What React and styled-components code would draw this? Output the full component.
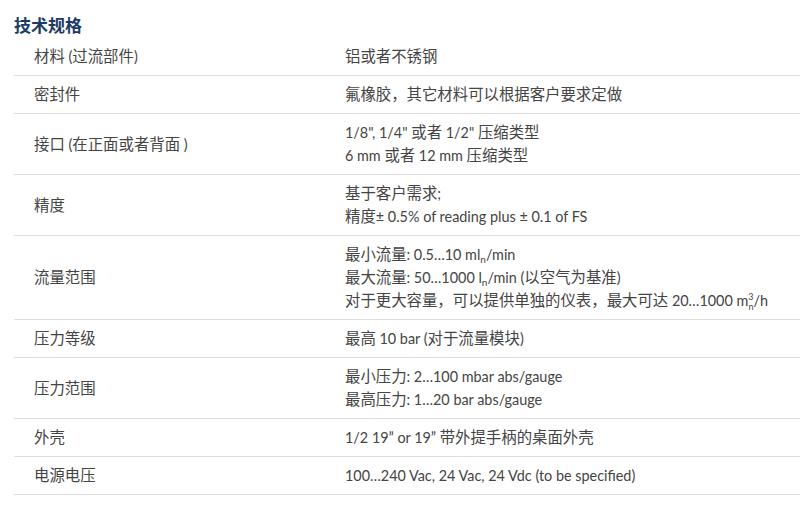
import React from "react";
import styled, { createGlobalStyle } from "styled-components";

const Global = createGlobalStyle`
  html, body { margin: 0; padding: 0; background: #fff; }
  body { font-family: Lato, "Noto Sans CJK SC", sans-serif; }
`;

const Page = styled.div`
  padding-left: 14px;
  width: 786px;
`;

const Title = styled.h2`
  margin: 0;
  height: 38px;
  padding-top: 14px;
  box-sizing: border-box;
  font-family: "Noto Sans CJK SC", sans-serif;
  font-size: 17px;
  line-height: 22px;
  font-weight: 700;
  color: #1b3a66;
`;

const Table = styled.div`
  display: flex;
  flex-direction: column;
`;

const Row = styled.div`
  display: grid;
  grid-template-columns: 331px 1fr;
  align-items: center;
  padding: 7px 0;
  border-bottom: 1px solid #dedede;
  font-family: Lato, "Noto Sans CJK SC", sans-serif;
  font-size: 14.4px;
  line-height: 23px;
  color: #444;
`;

const Label = styled.div`
  padding-left: 20px;
`;

const Value = styled.div`
  display: flex;
  flex-direction: column;
`;

const Line = styled.div`
  white-space: nowrap;
`;

const Cjk = styled.span`
  font-family: "Noto Sans CJK SC", sans-serif;
  font-size: 15.4px;
  line-height: 0;
`;

const Sub = styled.sub`
  font-size: 10px;
  line-height: 0;
  vertical-align: -3px;
`;

const Sup = styled.sup`
  font-size: 9px;
  line-height: 0;
  vertical-align: 6px;
`;

const StackSub = styled(Sub)`
  font-size: 9px;
  vertical-align: -4px;
  margin-left: -5px;
`;

const CJK_RE = /([\u3000-\u303f\u3400-\u9fff\uff00-\uffef]+)/;

function Mixed({ text }) {
  return text
    .split(CJK_RE)
    .filter((p) => p !== "")
    .map((p, i) => (CJK_RE.test(p) ? <Cjk key={i}>{p}</Cjk> : <React.Fragment key={i}>{p}</React.Fragment>));
}

const M = (t) => <Mixed text={t} />;

const rows = [
  ["材料 (过流部件)", [M("铝或者不锈钢")]],
  ["密封件", [M("氟橡胶，其它材料可以根据客户要求定做")]],
  ["接口 (在正面或者背面 )", [M("1/8\", 1/4\" 或者 1/2\" 压缩类型"), M("6 mm 或者 12 mm 压缩类型")]],
  ["精度", [M("基于客户需求;"), M("精度± 0.5% of reading plus ± 0.1 of FS")]],
  [
    "流量范围",
    [
      <>{M("最小流量: 0.5…10 ml")}<Sub>n</Sub>/min</>,
      <>{M("最大流量: 50…1000 l")}<Sub>n</Sub>{M("/min (以空气为基准)")}</>,
      <>{M("对于更大容量，可以提供单独的仪表，最大可达 20…1000 m")}<Sup>3</Sup><StackSub>n</StackSub>/h</>,
    ],
  ],
  ["压力等级", [M("最高 10 bar (对于流量模块)")]],
  ["压力范围", [M("最小压力: 2…100 mbar abs/gauge"), M("最高压力: 1…20 bar abs/gauge")]],
  ["外壳", [M("1/2 19” or 19” 带外提手柄的桌面外壳")]],
  ["电源电压", [M("100…240 Vac, 24 Vac, 24 Vdc (to be specified)")]],
];

export default function App() {
  return (
    <Page>
      <Global />
      <Title>技术规格</Title>
      <Table>
        {rows.map(([label, lines], i) => (
          <Row key={i}>
            <Label>
              <Mixed text={label} />
            </Label>
            <Value>
              {lines.map((l, j) => (
                <Line key={j}>{l}</Line>
              ))}
            </Value>
          </Row>
        ))}
      </Table>
    </Page>
  );
}
